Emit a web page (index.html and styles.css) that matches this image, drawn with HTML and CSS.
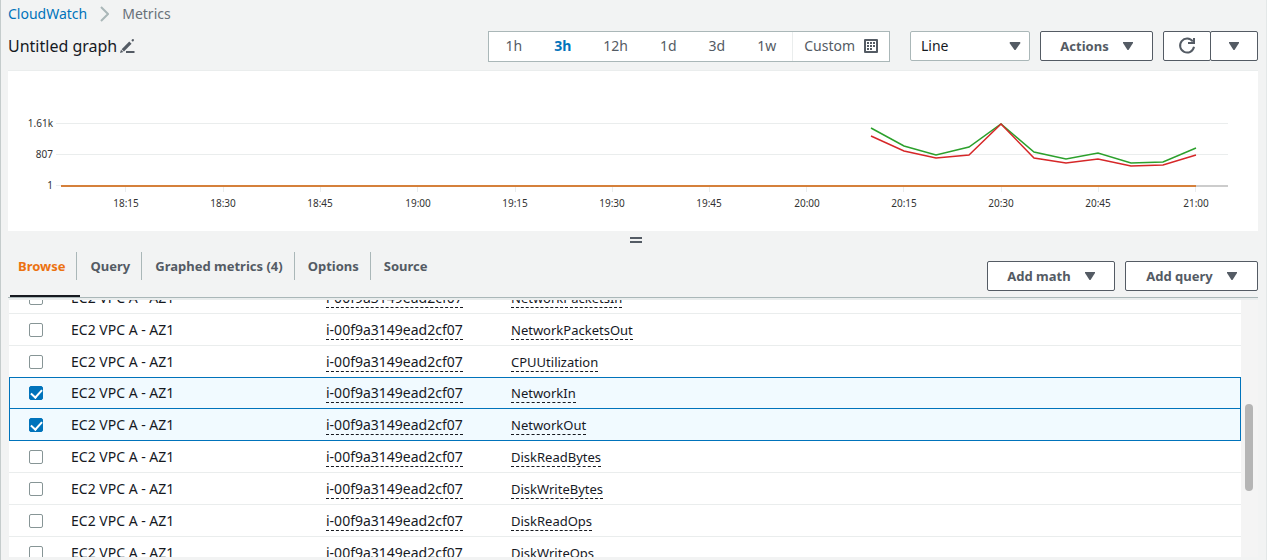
FILE: index.html
```html
<!DOCTYPE html>
<html lang="en">
<head>
<meta charset="utf-8">
<title>CloudWatch Metrics</title>
<link rel="stylesheet" href="styles.css">
</head>
<body>
<main class="page">
  <nav class="breadcrumb" aria-label="Breadcrumb">
    <a href="#">CloudWatch</a>
    <svg width="9" height="16" viewBox="0 0 9 16" aria-hidden="true"><path d="M1 1l7 7-7 7" fill="none" stroke="#aab7b8" stroke-width="2"/></svg>
    <span>Metrics</span>
  </nav>

  <header class="toolbar">
    <h1 class="title">Untitled graph</h1>
    <button class="edit" aria-label="Rename graph">
      <svg width="15" height="15" viewBox="0 0 15 15" aria-hidden="true"><path d="M2.8 11.3L10.4 3.700" stroke="#545b64" stroke-width="3.200" fill="none"/><path d="M0 14l1-3.200 2.300 2.200zM11.300 1.200l1-1q.7-.4 1.300.1t.2 1.400l-1 1z" fill="#545b64"/><path d="M6 13h8.500" stroke="#545b64" stroke-width="2"/></svg>
    </button>
    <div class="range" role="group" aria-label="Time range">
      <button>1h</button><button class="on">3h</button><button>12h</button><button>1d</button><button>3d</button><button>1w</button>
      <button class="custom">Custom
        <svg width="14" height="14" viewBox="0 0 14 14" aria-hidden="true"><rect width="14" height="14" rx="1" fill="#545b64"/><path d="M2 2h10v10H2z" fill="#fff"/><path d="M6 4h2M9 4h2M3 4h2M3 7h2M6 7h2M9 7h2M3 10h2M6 10h2" stroke="#545b64" stroke-width="2"/></svg>
      </button>
    </div>
    <div class="select">
      <select aria-label="Graph type"><option>Line</option><option>Stacked area</option><option>Number</option></select>
      <svg class="caret" width="12" height="8" viewBox="0 0 12 8" aria-hidden="true"><path d="M1 0h10l.5 1L6.500 8h-1L.5 1z"/></svg>
    </div>
    <button class="btn actions">Actions <svg class="caret" width="10" height="8" viewBox="0 0 10 8" aria-hidden="true"><path d="M0 0h10v1L5.500 8h-1L0 1z"/></svg></button>
    <div class="split">
      <button class="btn" aria-label="Refresh"><svg width="18" height="18" viewBox="0 0 18 18" aria-hidden="true"><path d="M14.800 4.500A7 7 0 1 0 16 9.800" fill="none" stroke="#545b64" stroke-width="2"/><path d="M16 1v5h-6" fill="none" stroke="#545b64" stroke-width="2"/></svg></button>
      <button class="btn" aria-label="Refresh options"><svg class="caret" width="10" height="8" viewBox="0 0 10 8" aria-hidden="true"><path d="M0 0h10v1L5.500 8h-1L0 1z"/></svg></button>
    </div>
  </header>

  <section class="chart" aria-label="Graph">
    <svg viewBox="0 0 1250 160" role="img" aria-label="Network metrics over three hours">
      <path d="M48 52.500H1220M48 83.500H1220M48 114.500H53M117.500 115v6M215.500 115v6M312.500 115v6M409.500 115v6M507.500 115v6M604.500 115v6M701.500 115v6M798.500 115v6M895.500 115v6M993.500 115v6M1090.500 115v6M1187.500 115v6" stroke="#eaeded" fill="none"/>
      <path d="M1188 115H1220" stroke="#ccc" stroke-width="2"/>
      <g class="axis end"><text x="45" y="56">1.61k</text><text x="45" y="87">807</text><text x="45" y="118">1</text></g>
      <g class="axis mid"><text x="118" y="136">18:15</text><text x="215" y="136">18:30</text><text x="312" y="136">18:45</text><text x="410" y="136">19:00</text><text x="507" y="136">19:15</text><text x="604" y="136">19:30</text><text x="701" y="136">19:45</text><text x="799" y="136">20:00</text><text x="896" y="136">20:15</text><text x="993" y="136">20:30</text><text x="1090" y="136">20:45</text><text x="1188" y="136">21:00</text></g>
      <g fill="none" stroke-width="1.500">
        <polyline stroke="#2ca02c" points="863,57 896,75 928,84 961,76 993,53 1026,81 1058,88 1090,82 1123,92 1155,91 1188,77"/>
        <polyline stroke="#d62728" points="863,65 896,80 928,87 961,84 993,53 1026,87 1058,92 1090,88 1123,95 1155,94 1188,84"/>
      </g>
      <path d="M53 115H1188" stroke="#d5803b" stroke-width="2"/>
    </svg>
  </section>

  <div class="grip" aria-hidden="true"><i></i></div>

  <div class="tabbar">
    <div class="tabs" role="tablist">
      <button role="tab" aria-selected="true" class="tab active">Browse</button>
      <button role="tab" class="tab">Query</button>
      <button role="tab" class="tab">Graphed metrics (4)</button>
      <button role="tab" class="tab">Options</button>
      <button role="tab" class="tab">Source</button>
    </div>
    <button class="btn add-math">Add math <svg class="caret" width="10" height="8" viewBox="0 0 10 8" aria-hidden="true"><path d="M0 0h10v1L5.500 8h-1L0 1z"/></svg></button>
    <button class="btn add-query">Add query <svg class="caret" width="10" height="8" viewBox="0 0 10 8" aria-hidden="true"><path d="M0 0h10v1L5.500 8h-1L0 1z"/></svg></button>
  </div>

  <section class="list">
    <div class="view">
      <table class="metrics">
        <colgroup><col class="c-check"><col class="c-name"><col class="c-id"><col></colgroup>
        <tbody>
          <tr><td><input type="checkbox" aria-label="NetworkPacketsIn"></td><td>EC2 VPC A - AZ1</td><td><span>i-00f9a3149ead2cf07</span></td><td><span>NetworkPacketsIn</span></td></tr>
          <tr><td><input type="checkbox" aria-label="NetworkPacketsOut"></td><td>EC2 VPC A - AZ1</td><td><span>i-00f9a3149ead2cf07</span></td><td><span>NetworkPacketsOut</span></td></tr>
          <tr class="before"><td><input type="checkbox" aria-label="CPUUtilization"></td><td>EC2 VPC A - AZ1</td><td><span>i-00f9a3149ead2cf07</span></td><td><span>CPUUtilization</span></td></tr>
          <tr class="sel first"><td><input type="checkbox" checked aria-label="NetworkIn"></td><td>EC2 VPC A - AZ1</td><td><span>i-00f9a3149ead2cf07</span></td><td><span>NetworkIn</span></td></tr>
          <tr class="sel"><td><input type="checkbox" checked aria-label="NetworkOut"></td><td>EC2 VPC A - AZ1</td><td><span>i-00f9a3149ead2cf07</span></td><td><span>NetworkOut</span></td></tr>
          <tr><td><input type="checkbox" aria-label="DiskReadBytes"></td><td>EC2 VPC A - AZ1</td><td><span>i-00f9a3149ead2cf07</span></td><td><span>DiskReadBytes</span></td></tr>
          <tr><td><input type="checkbox" aria-label="DiskWriteBytes"></td><td>EC2 VPC A - AZ1</td><td><span>i-00f9a3149ead2cf07</span></td><td><span>DiskWriteBytes</span></td></tr>
          <tr><td><input type="checkbox" aria-label="DiskReadOps"></td><td>EC2 VPC A - AZ1</td><td><span>i-00f9a3149ead2cf07</span></td><td><span>DiskReadOps</span></td></tr>
          <tr><td><input type="checkbox" aria-label="DiskWriteOps"></td><td>EC2 VPC A - AZ1</td><td><span>i-00f9a3149ead2cf07</span></td><td><span>DiskWriteOps</span></td></tr>
        </tbody>
      </table>
    </div>
    <div class="track" aria-hidden="true"><div class="thumb"></div></div>
  </section>
</main>
</body>
</html>
```
FILE: styles.css
```css
* { box-sizing: border-box; }
body {
  margin: 0;
  background: #f2f3f3;
  color: #16191f;
  font: 14px/20px "Noto Sans", "Open Sans", sans-serif;
}
button, select { font: inherit; color: inherit; cursor: pointer; }
svg { display: block; flex: none; }

.page {
  display: flex;
  flex-direction: column;
  height: 100vh;
  padding: 4px 8px 3px 7px;
  border-left: 1px solid #c5cccc;
  border-right: 1px solid #e4e8e8;
}

.breadcrumb { display: flex; align-items: center; gap: 13px; color: #687078; }
.breadcrumb a { color: #0073bb; text-decoration: none; }

.toolbar { display: flex; align-items: center; height: 32px; margin: 6px 0 8px; }
.title { margin: 0; font-size: 16px; font-weight: 400; }
.edit { margin-left: 3px; padding: 0; border: 0; background: none; }

.range {
  display: flex;
  height: 31px;
  margin-left: auto;
  border: 1px solid #aab7b8;
  background: #fff;
  color: #545b64;
}
.range button { padding: 0 16px; border: 0; background: none; }
.range .on { color: #0073bb; font-weight: 700; }
.range .custom {
  display: flex;
  align-items: center;
  gap: 9px;
  padding: 0 11px;
  border-left: 1px solid #eaeded;
}

.select { position: relative; width: 120px; margin-left: 20px; }
.select select {
  display: block;
  width: 100%;
  height: 30px;
  padding: 0 10px;
  border: 1px solid #aab7b8;
  border-radius: 2px;
  background: #fff;
  appearance: none;
}
.select .caret { position: absolute; right: 9px; top: 11px; pointer-events: none; }
.caret { fill: #545b64; }

.btn {
  display: flex;
  align-items: center;
  justify-content: center;
  gap: 14px;
  height: 30px;
  padding: 0;
  border: 1px solid #545b64;
  border-radius: 2px;
  background: #fff;
  color: #545b64;
  font-size: 13px;
  font-weight: 700;
}
.actions { width: 113px; margin-left: 10px; }
.split { display: flex; margin-left: 10px; }
.split .btn { width: 48px; }
.split .btn + .btn { margin-left: -1px; }

.chart { border-top: 1px solid #eaeded; background: #fff; }
.chart svg { width: 100%; }
.axis { font-size: 10px; fill: #333; }
.end { text-anchor: end; }
.mid { text-anchor: middle; }

.grip { display: flex; justify-content: center; padding: 6px 0 6px 6px; }
.grip i { width: 12px; height: 6px; border: solid #545b64; border-width: 2px 0; }

.tabbar {
  display: flex;
  align-items: flex-end;
  gap: 10px;
  height: 49px;
  padding-bottom: 6px;
  border-bottom: 1px solid #aab7b8;
}
.tabs { display: flex; align-self: flex-start; margin: 3px auto 0 2px; }
.tab {
  position: relative;
  height: 28px;
  padding: 0 11px 0 13px;
  border: 0;
  border-right: 1px solid #aab7b8;
  background: none;
  color: #545b64;
  font-size: 13px;
  font-weight: 700;
}
.tab:last-child { border-right: 0; }
.active { padding-left: 8px; color: #ec7211; }
.active::after {
  content: "";
  position: absolute;
  left: 0;
  right: -4px;
  bottom: -17px;
  height: 2px;
  background: #16191f;
}
.add-math { width: 128px; }
.add-query { width: 133px; }

.list {
  display: flex;
  flex: 1;
  min-height: 0;
  margin-left: 1px;
  border-top: 2px solid #eaeded;
  background: #fff;
}
.view { flex: 1; overflow: hidden; }
.track { width: 17px; padding: 104px 5px 0 4px; background: #f4f4f4; }
.thumb { height: 87px; border-radius: 4px; background: #b5b5b5; }

.metrics {
  width: 100%;
  margin-top: -18px;
  border-spacing: 0;
  table-layout: fixed;
  line-height: 16px;
}
.c-check { width: 62px; }
.c-name { width: 255px; }
.c-id { width: 185px; }
.metrics td { height: 32px; padding: 0; border-bottom: 1px solid #eaeded; }
.metrics td:last-child { font-size: 13px; }
.metrics .before td { height: 31px; border-bottom: 0; }
.metrics span { border-bottom: 1px dashed #16191f; }
.metrics .sel td { border-bottom-color: #0073bb; background: #f1faff; }
.metrics .first td { border-top: 1px solid #0073bb; }
.metrics td:first-child { padding-left: 20px; }
.metrics .sel td:first-child { padding-left: 19px; border-left: 1px solid #0073bb; }
.metrics .sel td:last-child { border-right: 1px solid #0073bb; }
.metrics input {
  display: grid;
  place-items: center;
  width: 14px;
  height: 14px;
  margin: 0;
  border: 1px solid #879596;
  border-radius: 2px;
  background: #fff;
  appearance: none;
}
.metrics input:checked { border-color: #0073bb; background: #0073bb; }
.metrics input:checked::after {
  content: "";
  width: 5px;
  height: 9px;
  margin-bottom: 2px;
  border: solid #fff;
  border-width: 0 2px 2px 0;
  transform: rotate(42deg);
}
```
